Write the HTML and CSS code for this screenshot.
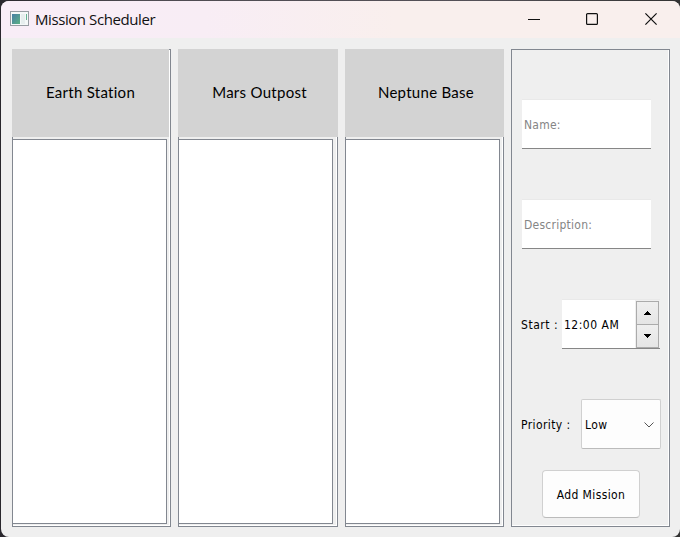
FILE: index.html
```html
<!DOCTYPE html>
<html lang="en">
<head>
<meta charset="utf-8">
<title>Mission Scheduler</title>
<link rel="stylesheet" href="styles.css">
</head>
<body>
<div class="window">
  <header class="titlebar">
    <svg class="app-icon" width="19" height="16" viewBox="0 0 19 16">
      <defs><linearGradient id="pane" x1="0" y1="0" x2="1" y2="1"><stop offset="0" stop-color="#477ea5"/><stop offset="1" stop-color="#5bb184"/></linearGradient></defs>
      <rect x=".5" y=".5" width="18" height="14" fill="#f4f8f8" stroke="#979da3"/>
      <rect x="2" y="3" width="8" height="10" fill="url(#pane)"/>
      <rect x="11" y="3" width="4" height="10" fill="#e6eeee"/>
      <path d="M16 3h1v6h-1z" fill="#65b291"/>
    </svg>
    <h1 class="title">Mission Scheduler</h1>
    <svg class="controls" width="126" height="14" viewBox="0 0 126 14" fill="none" stroke="#111" stroke-width="1.2">
      <path d="M0 7.5h12" stroke-width="1"/>
      <rect x="58.6" y="1.6" width="10.8" height="10.8" rx="1"/>
      <path d="M117.4 1.4l11.2 11.2M128.6 1.4L117.4 12.6"/>
    </svg>
  </header>
  <main class="board">
    <section class="station first"><h2>Earth Station</h2><div class="list"></div></section>
    <section class="station second"><h2>Mars Outpost</h2><div class="list"></div></section>
    <section class="station third"><h2>Neptune Base</h2><div class="list"></div></section>
    <form class="panel">
      <div class="field name"><span>Name:</span></div>
      <div class="field description"><span>Description:</span></div>
      <div class="row start">
        <label>Start :</label>
        <div class="time"><span>12:00 AM</span>
          <div class="spin">
            <div class="step"><svg width="7" height="4" shape-rendering="crispEdges"><path d="M3 0h1v1h1v1h1v1h1v1H0V3h1V2h1V1h1z"/></svg></div>
            <div class="step"><svg width="7" height="4" shape-rendering="crispEdges"><path d="M0 0h7v1H6v1H5v1H4v1H3V3H2V2H1V1H0z"/></svg></div>
          </div>
        </div>
      </div>
      <div class="row priority">
        <label>Priority :</label>
        <div class="select"><span>Low</span><svg width="10" height="6" viewBox="0 0 10 6" fill="none" stroke="#555"><path d="M.5.5L5 5 9.5.5"/></svg></div>
      </div>
      <button type="button" class="add"><span>Add Mission</span></button>
    </form>
  </main>
</div>
</body>
</html>
```

FILE: styles.css
```css
* { box-sizing: border-box; }
body {
  margin: 0;
  height: 537px;
  padding: 1px 0 0 1px;
  overflow: hidden;
  background: linear-gradient(90deg, #29272d, #4e4b51 20%, #555158 70%, #333);
  font: 12px "DejaVu Sans Condensed", "DejaVu Sans", sans-serif;
  font-stretch: condensed;
  letter-spacing: 0.4px;
  color: #000;
}
.window {
  width: 679px;
  height: 536px;
  border-radius: 8px;
  overflow: hidden;
  background: #efefef;
}
.titlebar {
  display: flex;
  align-items: center;
  height: 37px;
  padding: 0 0 1px 9px;
  background: linear-gradient(90deg, #f8edf7 0%, #f8edf5 30%, #f9efed 58%, #f9efed 100%);
}
.app-icon { margin-right: 6px; }
.title {
  margin: 0;
  width: 493px;
  font: 15px "Open Sans", "Noto Sans", sans-serif;
  letter-spacing: -0.42px;
  color: #111;
  white-space: nowrap;
}
.controls { overflow: visible; flex: none; }
.board {
  display: grid;
  grid-template-columns: 159px 160px 159px 159px;
  column-gap: 7px;
  height: 478px;
  margin: 11px 0 0 11px;
}
.station {
  display: flex;
  flex-direction: column;
  border: 1px solid #828790;
  box-shadow: inset -1px -1px #fff;
}
.station h2 {
  display: flex;
  align-items: center;
  justify-content: center;
  flex: none;
  height: 88px;
  margin: -1px -1px 0;
  padding: 0 0 2px 3px;
  background: #d3d3d3;
  font: 15px Lato, sans-serif;
  letter-spacing: 0.28px;
}
.first h2 { margin-right: 1px; padding-left: 0; }
.list {
  height: 385px;
  margin: 2px 3px 0 -1px;
  border: 1px solid #828790;
  background: #fff;
}
.second .list { margin-right: 4px; }
.panel {
  display: flex;
  flex-direction: column;
  border: 1px solid #828790;
  padding: 50px 8px 0 9px;
  box-shadow: inset -1px -1px #fff;
}
.field {
  display: flex;
  align-items: center;
  width: 129px;
  height: 50px;
  margin-left: 1px;
  padding: 2px 0 0 2px;
  border-top: 1px solid #e9e9e9;
  border-bottom: 1px solid #868686;
  background: #fff;
  color: #858585;
  letter-spacing: 0.25px;
}
.name { margin-top: -1px; }
.description { margin-top: 50px; }
.row { display: flex; align-items: center; height: 50px; margin-top: 50px; }
.row label { flex: none; padding-top: 2px; white-space: nowrap; }
.start label { width: 41px; letter-spacing: 0.55px; }
.priority label { width: 60px; }
.time {
  display: flex;
  align-items: center;
  width: 98px;
  height: 50px;
  flex: none;
  padding-left: 2px;
  border-top: 1px solid #e9e9e9;
  border-bottom: 1px solid #868686;
  background: #fff;
}
.time > span { width: 71px; padding-top: 2px; white-space: nowrap; letter-spacing: 0.5px; }
.spin { width: 25px; height: 48px; padding: 1px 1px 1px 1px; background: #efefef; }
.step {
  display: flex;
  align-items: center;
  justify-content: center;
  height: 24px;
  border: 1px solid #ababab;
  background: linear-gradient(#efefef, #e5e5e5);
}
.step + .step { height: 23px; border-top: 0; }
.select {
  display: flex;
  align-items: center;
  justify-content: space-between;
  width: 80px;
  height: 50px;
  flex: none;
  padding: 1px 6px 0 3px;
  border: 1px solid #d0d0d0;
  border-bottom-color: #bbb;
  border-radius: 2px;
  background: #fdfdfd;
}
.select span { padding-top: 1px; }
.add {
  width: 98px;
  height: 48px;
  margin: 21px 0 0 21px;
  padding: 2px 0 0;
  border: 1px solid #d0d0d0;
  border-bottom-color: #bbb;
  border-radius: 4px;
  background: #fdfdfd;
  font: inherit;
  letter-spacing: 0.4px;
  color: inherit;
}
```
